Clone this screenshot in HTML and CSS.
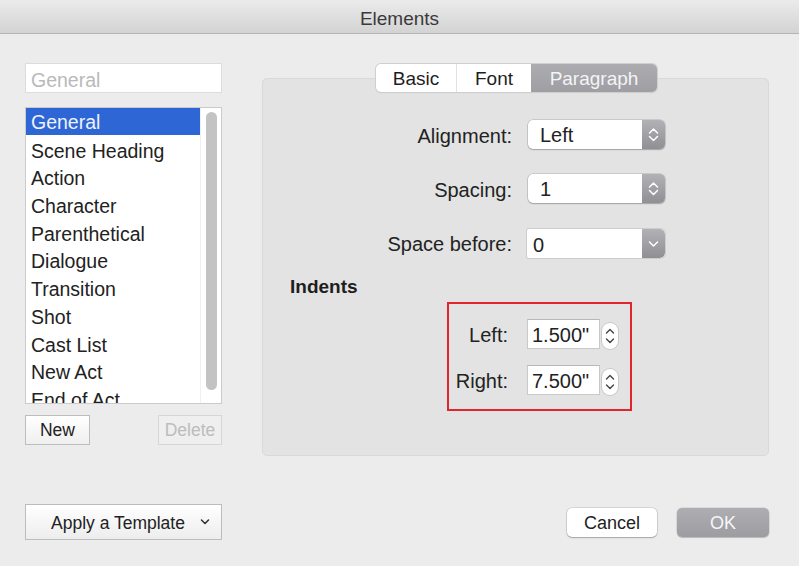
FILE: index.html
```html
<!DOCTYPE html>
<html>
<head>
<meta charset="utf-8">
<link rel="stylesheet" href="styles.css">
</head>
<body>
<div class="window">
  <div class="titlebar">Elements</div>
  <div class="main">
    <div class="left">
      <div class="search">General</div>
      <div class="listbox">
        <div class="rows">
          <div class="row selected">General</div>
          <div class="row">Scene Heading</div>
          <div class="row">Action</div>
          <div class="row">Character</div>
          <div class="row">Parenthetical</div>
          <div class="row">Dialogue</div>
          <div class="row">Transition</div>
          <div class="row">Shot</div>
          <div class="row">Cast List</div>
          <div class="row">New Act</div>
          <div class="row">End of Act</div>
        </div>
        <div class="scrollbar"><div class="thumb"></div></div>
      </div>
      <div class="btnrow">
        <div class="btn">New</div>
        <div class="btn disabled">Delete</div>
      </div>
    </div>
    <div class="panel-wrap">
      <div class="tabs">
        <div class="tab t-basic">Basic</div>
        <div class="tab t-font">Font</div>
        <div class="tab t-para active">Paragraph</div>
      </div>
      <div class="panel">
        <div class="form">
          <div class="label">Alignment:</div>
          <div class="popup">
            <span class="val">Left</span>
            <span class="arrows"><svg width="23" height="29" viewBox="0 0 23 29"><polyline points="7.5,13 11.5,9 15.5,13" fill="none" stroke="#fff" stroke-width="1.5" stroke-linecap="round" stroke-linejoin="round"/><polyline points="7.5,16.5 11.5,20.5 15.5,16.5" fill="none" stroke="#fff" stroke-width="1.5" stroke-linecap="round" stroke-linejoin="round"/></svg></span>
          </div>
          <div class="label">Spacing:</div>
          <div class="popup">
            <span class="val">1</span>
            <span class="arrows"><svg width="23" height="29" viewBox="0 0 23 29"><polyline points="7.5,13 11.5,9 15.5,13" fill="none" stroke="#fff" stroke-width="1.5" stroke-linecap="round" stroke-linejoin="round"/><polyline points="7.5,16.5 11.5,20.5 15.5,16.5" fill="none" stroke="#fff" stroke-width="1.5" stroke-linecap="round" stroke-linejoin="round"/></svg></span>
          </div>
          <div class="label">Space before:</div>
          <div class="combo">
            <span class="cval">0</span>
            <span class="arrows"><svg width="23" height="29" viewBox="0 0 23 29"><polyline points="7.5,13 11.5,17 15.5,13" fill="none" stroke="#fff" stroke-width="1.5" stroke-linecap="round" stroke-linejoin="round"/></svg></span>
          </div>
        </div>
        <div class="heading">Indents</div>
        <div class="indents">
          <div class="ilabel">Left:</div>
          <div class="field">1.500"</div>
          <div class="stepper"><svg width="16" height="26" viewBox="0 0 16 26"><polyline points="4.5,10 8,6.5 11.5,10" fill="none" stroke="#444" stroke-width="1.4" stroke-linecap="round" stroke-linejoin="round"/><polyline points="4.5,16 8,19.5 11.5,16" fill="none" stroke="#444" stroke-width="1.4" stroke-linecap="round" stroke-linejoin="round"/></svg></div>
          <div class="ilabel">Right:</div>
          <div class="field">7.500"</div>
          <div class="stepper"><svg width="16" height="26" viewBox="0 0 16 26"><polyline points="4.5,10 8,6.5 11.5,10" fill="none" stroke="#444" stroke-width="1.4" stroke-linecap="round" stroke-linejoin="round"/><polyline points="4.5,16 8,19.5 11.5,16" fill="none" stroke="#444" stroke-width="1.4" stroke-linecap="round" stroke-linejoin="round"/></svg></div>
        </div>
      </div>
    </div>
  </div>
  <div class="footer">
    <div class="template">
      <span>Apply a Template</span>
      <svg width="10" height="8" viewBox="0 0 10 8"><polyline points="1.5,2 5,5.5 8.5,2" fill="none" stroke="#333" stroke-width="1.6" stroke-linecap="round" stroke-linejoin="round"/></svg>
    </div>
    <div class="spacer"></div>
    <div class="pbtn cancel">Cancel</div>
    <div class="pbtn ok">OK</div>
  </div>
</div>
</body>
</html>
```

FILE: styles.css
```css
* { box-sizing: border-box; }
html, body {
  margin: 0;
  padding: 0;
  width: 799px;
  height: 566px;
  overflow: hidden;
  background: #ececec;
  font-family: "Liberation Sans", Arial, sans-serif;
  color: #262626;
}
.window {
  width: 799px;
  height: 566px;
  display: flex;
  flex-direction: column;
}
.titlebar {
  height: 34px;
  flex: none;
  background: linear-gradient(#ebebeb, #d3d3d3);
  border-bottom: 1px solid #b4b4b4;
  text-align: center;
  font-size: 19px;
  line-height: 37px;
  color: #3a3a3a;
  overflow: hidden;
}
.main {
  display: flex;
  padding-left: 25px;
}
.left {
  width: 197px;
  display: flex;
  flex-direction: column;
  padding-top: 29px;
}
.search {
  height: 30px;
  background: #fff;
  border: 1px solid #dcdcdc;
  color: #b9b9b9;
  font-size: 19.5px;
  line-height: 32px;
  padding-left: 5px;
  overflow: hidden;
}
.listbox {
  margin-top: 14px;
  height: 297px;
  background: #fff;
  border: 1px solid #cbcbcb;
  display: flex;
  overflow: hidden;
}
.rows {
  width: 174px;
  flex: none;
  padding-top: 1px;
}
.row {
  height: 27.7px;
  line-height: 28.5px;
  font-size: 19.5px;
  padding-left: 5px;
  white-space: nowrap;
  color: #222;
}
.row.selected {
  margin-top: -1px;
  height: 27px;
  line-height: 29px;
  margin-bottom: 1.7px;
  background: #2e66d6;
  color: #eef2fb;
}
.scrollbar {
  flex: 1;
  border-left: 1px solid #f0f0f0;
  padding: 4px 0 0 5px;
}
.thumb {
  width: 11px;
  height: 278px;
  border-radius: 6px;
  background: #c3c3c3;
}
.btnrow {
  margin-top: 11px;
  display: flex;
  justify-content: space-between;
}
.btn {
  height: 30px;
  width: 65px;
  border: 1px solid #bdbdbd;
  background: linear-gradient(#ffffff, #efefef);
  font-size: 17.5px;
  line-height: 29px;
  text-align: center;
  color: #222;
}
.btn.disabled {
  width: 64px;
  color: #bdbdbd;
  border-color: #d6d6d6;
  background: #efefef;
}
.panel-wrap {
  margin-left: 40px;
  width: 507px;
  display: flex;
  flex-direction: column;
  padding-top: 30px;
}
.tabs {
  align-self: center;
  margin-left: 2px;
  height: 28px;
  display: flex;
  border-radius: 5px;
  background: #fff;
  box-shadow: 0 0 0 1px #cfcfcf, 0 1px 1px rgba(0,0,0,0.12);
  overflow: hidden;
  position: relative;
  z-index: 1;
  font-size: 19px;
}
.tab {
  line-height: 30px;
  text-align: center;
  color: #1e1e1e;
}
.t-basic { width: 81px; border-right: 1px solid #e2e2e2; }
.t-font { width: 74px; }
.t-para { width: 126px; }
.tab.active {
  background: linear-gradient(#acacb1, #9e9ea3);
  color: #f4f4f6;
}
.panel {
  margin-top: -14px;
  height: 378px;
  background: #e3e3e3;
  border: 1px solid #d9d9d9;
  border-radius: 5px;
  padding: 41px 0 0 27px;
}
.form {
  display: grid;
  grid-template-columns: 222px 138px;
  column-gap: 15px;
  row-gap: 25px;
  align-items: center;
}
.label {
  text-align: right;
  font-size: 20px;
  padding-top: 3px;
  color: #222;
}
.popup {
  height: 29px;
  width: 137px;
  margin-left: 1px;
  display: flex;
  background: #fff;
  border-radius: 5px;
  box-shadow: 0 0 0 0.5px rgba(0,0,0,0.22), 0 1px 1.5px rgba(0,0,0,0.2);
  overflow: hidden;
}
.val {
  flex: 1;
  padding-left: 12px;
  font-size: 20px;
  line-height: 30px;
  color: #222;
}
.arrows {
  width: 23px;
  flex: none;
  height: 29px;
  background: linear-gradient(#b1b1b6, #8f8f94);
  display: block;
}
.arrows svg { display: block; }
.combo {
  height: 29px;
  width: 138px;
  margin-top: 1px;
  display: flex;
  background: #fff;
  border-radius: 2px 5px 5px 2px;
  box-shadow: 0 0 0 1px #cdcdcd;
  overflow: hidden;
}
.combo .arrows { border-radius: 0 5px 5px 0; }
.cval {
  flex: 1;
  padding-left: 6px;
  font-size: 20px;
  line-height: 33px;
  color: #222;
}
.heading {
  margin-top: 17px;
  font-size: 19px;
  font-weight: bold;
  line-height: 23px;
  color: #1e1e1e;
}
.indents {
  margin: 4px 0 0 157px;
  width: 185px;
  height: 109px;
  border: 2px solid #e0262c;
  display: grid;
  grid-template-columns: 59px 73px 16px;
  grid-template-rows: 30px 30px;
  column-gap: 19px;
  row-gap: 16px;
  padding-top: 15px;
  align-items: center;
}
.indents .stepper { margin-left: -17px; }
.ilabel {
  text-align: right;
  font-size: 20px;
  padding-top: 3px;
  color: #222;
}
.field {
  height: 30px;
  background: #fff;
  border: 1px solid #c9c9c9;
  border-top-color: #b8b8b8;
  font-size: 20px;
  line-height: 31px;
  padding-left: 4px;
  color: #222;
  overflow: hidden;
}
.stepper {
  width: 16px;
  height: 26px;
  margin-top: 4px;
  background: #fff;
  border-radius: 8px;
  box-shadow: 0 0 0 1px #c9c9c9;
}
.stepper svg { display: block; }
.footer {
  margin-top: 48px;
  display: flex;
  align-items: center;
  padding: 0 30px 0 25px;
}
.template {
  width: 197px;
  height: 36px;
  border: 1px solid #bcbcbc;
  background: linear-gradient(#ffffff, #ededed);
  display: flex;
  align-items: center;
  padding-left: 25px;
  padding-top: 2px;
  font-size: 17.5px;
  color: #222;
}
.template span { flex: 1; }
.template svg { margin-right: 11px; margin-top: -2px; }
.spacer { flex: 1; }
.pbtn {
  height: 29px;
  border-radius: 5px;
  text-align: center;
  font-size: 18px;
  line-height: 31px;
}
.cancel {
  width: 90px;
  background: #fff;
  color: #222;
  box-shadow: 0 0 0 0.5px rgba(0,0,0,0.2), 0 1px 1.5px rgba(0,0,0,0.22);
}
.ok {
  width: 92px;
  margin-left: 20px;
  background: linear-gradient(#adadb2, #9c9ca1);
  color: #f6f6f8;
  box-shadow: 0 0 0 0.5px rgba(0,0,0,0.15), 0 1px 1px rgba(0,0,0,0.15);
}
```
